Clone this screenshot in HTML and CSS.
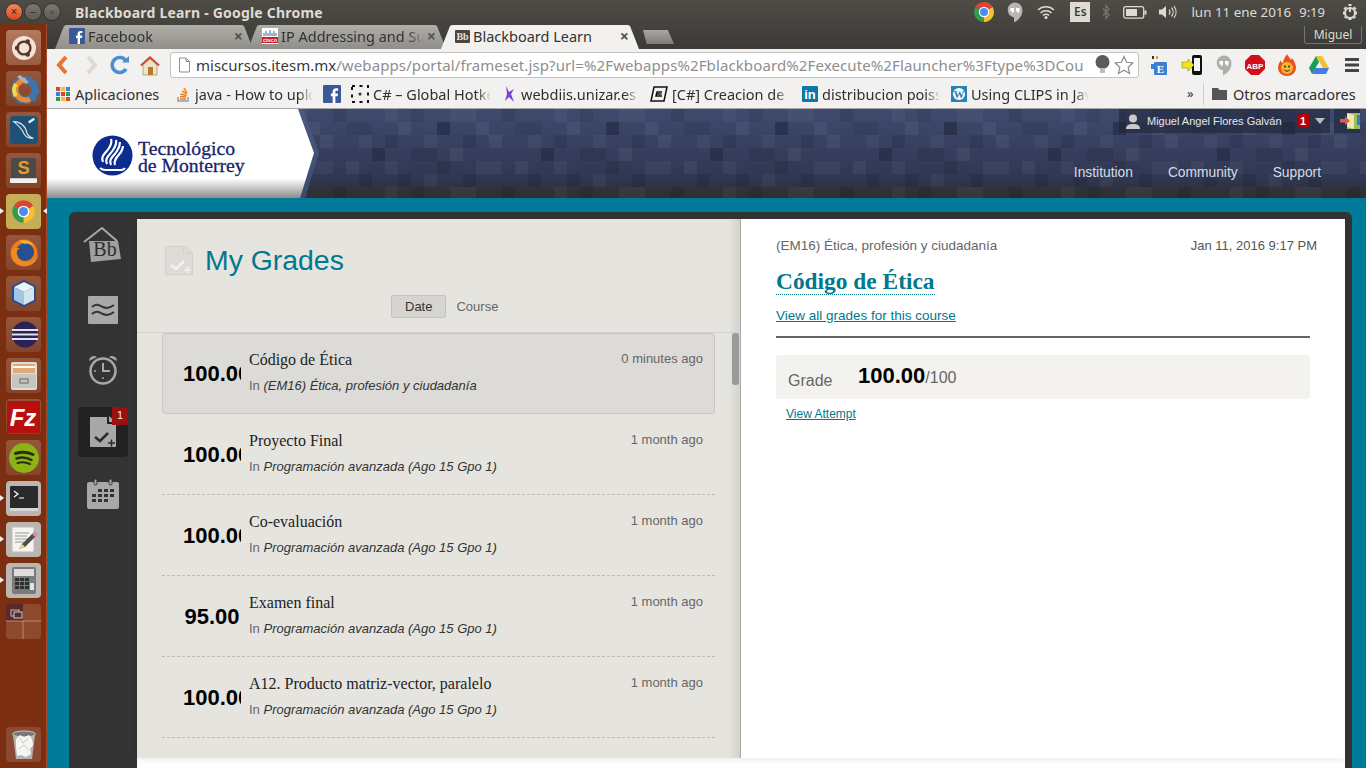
FILE: index.html
```html
<!DOCTYPE html>
<html lang="en">
<head>
    <meta charset="UTF-8">
    <title>Blackboard Learn - Google Chrome</title>
    <link rel="stylesheet" href="styles.css">
</head>
<body>

<svg class="defs" width="0" height="0">
    <symbol id="i-chrome" viewBox="0 0 24 24">
        <path fill="#dc4437" d="M12 12L3.34 7A10 10 0 0 1 20.66 7Z"/>
        <path fill="#f6c02c" d="M12 12L20.66 7A10 10 0 0 1 12 22Z"/>
        <path fill="#2f9e4c" d="M12 12L12 22A10 10 0 0 1 3.34 7Z"/>
        <circle cx="12" cy="12" r="5.2" fill="#fff"/>
        <circle cx="12" cy="12" r="4" fill="#4c8bf0"/>
    </symbol>
    <symbol id="i-fb" viewBox="0 0 16 16">
        <rect width="16" height="16" rx="1" fill="#3b5998"/>
        <path fill="#fff" d="M11 16V10h2l.3-2.4H11V6.2c0-.7.2-1.1 1.2-1.1h1.2V3c-.3 0-1-.1-1.800-.1-1.800 0-3 1.100-3 3.100v1.600H7V10h1.600v6z"/>
    </symbol>
    <symbol id="i-hangout" viewBox="0 0 16 20">
        <path d="M8 0a7.500 7.500 0 0 0-1 14.900V20c4-2 8.500-6 8.500-12.500A7.500 7.500 0 0 0 8 0z"/>
        <path fill="#fff" d="M3.500 5.500h3.500v3.500l-1.800 2.500V9H3.500zM9 5.500h3.500v3.500l-1.800 2.500V9H9z"/>
    </symbol>
</svg>

<div class="titlebar">
    <div class="win-buttons">
        <span class="win-btn win-close">×</span>
        <span class="win-btn">–</span>
        <span class="win-btn">▫</span>
    </div>
    <div class="win-title">Blackboard Learn - Google Chrome</div>
    <div class="tray">
        <svg class="tray-chrome" width="24" height="24"><use href="#i-chrome"/></svg>
        <svg class="tray-hang" width="16" height="21" fill="#b8b6b0"><use href="#i-hangout"/></svg>
        <svg class="tray-wifi" width="18" height="14" viewBox="0 0 18 14" fill="none" stroke="#dfdbd2" stroke-width="1.500">
            <path d="M1 5a11.500 11.500 0 0 1 16 0M3.500 8a8 8 0 0 1 11 0M6 10.500a4.200 4.200 0 0 1 6 0"/>
            <circle cx="9" cy="12.500" r=".8" fill="#dfdbd2"/>
        </svg>
        <span class="tray-lang">Es</span>
        <svg class="tray-bt" width="8" height="16" viewBox="0 0 8 16" fill="none" stroke="#77756f" stroke-width="1.200">
            <path d="M1 4.500l6 6.500-3 3.500V1.500l3 3.500-6 6.500"/>
        </svg>
        <svg class="tray-batt" width="24" height="13" viewBox="0 0 24 13">
            <rect x=".7" y=".7" width="20" height="11.500" rx="2" fill="none" stroke="#dfdbd2" stroke-width="1.300"/>
            <rect x="3" y="3" width="11" height="7" fill="#dfdbd2"/>
            <rect x="21.500" y="4.500" width="2" height="4" fill="#dfdbd2"/>
        </svg>
        <svg class="tray-vol" width="19" height="14" viewBox="0 0 19 14" fill="none" stroke="#dfdbd2" stroke-width="1.200">
            <path fill="#dfdbd2" stroke="none" d="M1 4.500h3L8 1v12L4 9.500H1z"/>
            <path d="M11 4.500a4 4 0 0 1 0 5M13.500 2.500a7 7 0 0 1 0 9M16 1a10 10 0 0 1 0 12" />
        </svg>
        <span class="tray-date">lun 11 ene 2016</span>
        <span class="tray-time">9:19</span>
        <svg class="tray-power" width="18" height="18" viewBox="0 0 18 18" fill="none" stroke="#dfdbd2" stroke-width="2">
            <circle cx="9" cy="10" r="5"/>
            <path stroke-width="3" stroke-dasharray="2 2.500" d="M9 1v2M2 10h2M14 10h2M3.500 4.500l1.500 1.500M14.500 4.500l-1.500 1.500M9 15v2M4 15l1-1M14 15l-1-1"/>
            <path d="M9 4v5"/>
        </svg>
    </div>
</div>

<div class="desktop">
    <div class="launcher">
        <div class="tile tile-ubuntu">
            <svg width="24" height="24" viewBox="0 0 26 26"><circle cx="13" cy="13" r="13" fill="#f1e3d8"/><circle cx="13" cy="13" r="7" fill="none" stroke="#5a3626" stroke-width="2.500"/><circle cx="5.500" cy="13" r="2.500" fill="#5a3626"/><circle cx="17" cy="6" r="2.500" fill="#5a3626"/><circle cx="17" cy="20" r="2.500" fill="#5a3626"/></svg>
        </div>
        <div class="tile">
            <svg width="30" height="30" viewBox="0 0 30 30"><circle cx="16" cy="16" r="10" fill="none" stroke="#3f74a8" stroke-width="7"/><circle cx="16" cy="16" r="13" fill="none" stroke="#3f74a8" stroke-width="3" stroke-dasharray="4 4"/><path d="M17 6a10 10 0 1 0 4 19" fill="none" stroke="#f08a2c" stroke-width="5"/><path d="M7 10a10 10 0 0 0 0 12" fill="none" stroke="#f5d94c" stroke-width="4"/><path d="M11 1l9 7-3 2-9-7z" fill="#aab2bc"/></svg>
        </div>
        <div class="tile">
            <svg width="28" height="28" viewBox="0 0 30 30"><rect width="30" height="30" rx="4" fill="#1f5176"/><path d="M4 6c7 0 13 5 14 12 1 3 4 5 7 6-4 0-8-1-10-5-2-5-6-9-11-13z" fill="none" stroke="#d5e2ec" stroke-width="1.300"/><path d="M20 7l6-4" stroke="#e6eef3" stroke-width="2.500"/></svg>
        </div>
        <div class="tile">
            <svg width="27" height="27" viewBox="0 0 28 28"><rect x="1" y="1" width="26" height="21" rx="2" fill="#4a4a48"/><rect y="22" width="28" height="5" rx="1" fill="#f0f0ee"/><text x="14" y="18" class="svg-s">S</text></svg>
        </div>
        <div class="tile tile-active">
            <svg width="27" height="27"><use href="#i-chrome"/></svg>
        </div>
        <div class="tile">
            <svg width="28" height="28" viewBox="0 0 28 28"><circle cx="14" cy="14" r="13.500" fill="#ee7a1d"/><circle cx="15" cy="13" r="9" fill="#27508f"/><path d="M1 13c1 9 8 14 14 14 8 0 13-6 13-13-1 5-5 9-11 9-6 0-9-3-10-8-1-3 1-5 3-6-4 0-8 0-9 4z" fill="#f08a1c"/><path d="M9 2c6-2 12 0 15 5-3-2-6-3-9-2z" fill="#f6b52a"/></svg>
        </div>
        <div class="tile">
            <svg width="26" height="29" viewBox="0 0 26 29"><path d="M13 1l12 6v15l-12 6-12-6V7z" fill="#2d4a86"/><path d="M13 3l10 5-10 5-10-5z" fill="#e9f2f7"/><path d="M3 8l10 5v13l-10-5z" fill="#9fc6e4"/><path d="M23 8l-10 5v13l10-5z" fill="#d3e6ee"/></svg>
        </div>
        <div class="tile">
            <svg width="31" height="31" viewBox="0 0 31 31"><path d="M15 1a14.500 14.500 0 0 0 0 29A14 14 0 0 1 15 1z" fill="#f39a1f"/><circle cx="17" cy="15.500" r="13" fill="#2c2255"/><path d="M4 11h26M4 15.500h26M4 20h26" stroke="#e3e2f0" stroke-width="2"/></svg>
        </div>
        <div class="tile">
            <svg width="26" height="28" viewBox="0 0 26 28"><rect width="26" height="28" rx="2" fill="#dedcd7"/><rect x="2" y="2" width="22" height="9" fill="#e0a97a"/><rect x="2" y="4" width="22" height="2" fill="#fdf6ec"/><rect x="1" y="12" width="24" height="14" fill="#c7c5c0"/><rect x="9" y="17" width="8" height="4" fill="none" stroke="#777" stroke-width="1.200"/></svg>
        </div>
        <div class="tile">
            <svg width="33" height="32" viewBox="0 0 33 32"><rect width="33" height="32" fill="#b80f0f"/><text x="16" y="25" class="svg-fz">Fz</text></svg>
        </div>
        <div class="tile">
            <svg width="30" height="30" viewBox="0 0 30 30" fill="none" stroke="#2a2f14" stroke-linecap="round"><circle cx="15" cy="15" r="15" fill="#8cb414" stroke="none"/><path stroke-width="3" d="M6.500 10.500c6-2 12-1.500 17.500 1"/><path stroke-width="2.500" d="M7.500 15.500c5-1.500 10.500-1 15 1.500"/><path stroke-width="2" d="M8.500 20c4-1 8.500-.8 12.500 1"/></svg>
        </div>
        <div class="tile tile-light running">
            <svg width="28" height="25" viewBox="0 0 28 25"><rect width="28" height="25" rx="1" fill="#2a2a2a"/><rect y="22" width="28" height="3" fill="#d8d8d6"/><path d="M4 5l4 3-4 3" fill="none" stroke="#fff" stroke-width="1.200"/><path d="M9 12h5" stroke="#fff"/></svg>
        </div>
        <div class="tile tile-light running">
            <svg width="28" height="28" viewBox="0 0 28 28"><rect x="2" y="1" width="22" height="25" fill="#f4f4f2" stroke="#bbb"/><path d="M5 7h14M5 10h12M5 13h13M5 16h9" stroke="#9a9a9a"/><path d="M9 23l3-5 11-11 3 3-11 11z" fill="#4f4f4c"/><path d="M22 8l3-3 3 3-3 3z" fill="#e089a8"/><path d="M9 23l3-5 3 3z" fill="#f2dc6b"/></svg>
        </div>
        <div class="tile tile-light running">
            <svg width="24" height="27" viewBox="0 0 24 27"><rect width="24" height="27" rx="2" fill="#7a7a78"/><rect x="2" y="2" width="20" height="7" fill="#dededc"/><g fill="#2e3030"><rect x="3" y="11" width="4" height="3"/><rect x="8" y="11" width="4" height="3"/><rect x="13" y="11" width="4" height="3"/><rect x="3" y="15" width="4" height="3"/><rect x="8" y="15" width="4" height="3"/><rect x="13" y="15" width="4" height="3"/><rect x="3" y="19" width="4" height="3"/><rect x="8" y="19" width="4" height="3"/><rect x="13" y="19" width="4" height="3"/></g><rect x="18" y="11" width="4" height="4" fill="#5c8aa0"/><rect x="18" y="16" width="4" height="7" fill="#dfe4e6"/></svg>
        </div>
        <div class="tile tile-workspace">
            <svg width="35" height="35" viewBox="0 0 35 35"><rect width="17" height="17" fill="#5a2a2a"/><path d="M0 17h35M17 17v18" stroke="#b78a74"/><rect x="5" y="6" width="8" height="6" fill="none" stroke="#bbb"/><rect x="8" y="8" width="8" height="6" fill="#5a2a2a" stroke="#ccc"/></svg>
        </div>
        <div class="tile tile-trash">
            <svg width="24" height="30" viewBox="0 0 24 30"><path d="M1 5l3 24h16l3-24z" fill="#b4b4b0"/><ellipse cx="12" cy="4" rx="11.500" ry="3" fill="#77777a" stroke="#c8c8c4"/><path d="M4 9l4-4 4 2 5-2 3 4 1 6-3 4 1 5-5 3-5-2-4 1-1-9z" fill="#f5f5f3"/><path d="M8 8l3 5 5-4M7 19l5-4 5 5" fill="none" stroke="#c9c9c5"/></svg>
        </div>
    </div>

    <div class="browser">
        <div class="tabstrip">
            <div class="tab">
                <svg width="16" height="16"><use href="#i-fb"/></svg>
                <span class="tab-label">Facebook</span>
                <span class="tab-x">×</span>
            </div>
            <div class="tab">
                <svg width="16" height="16" viewBox="0 0 16 16"><rect width="16" height="16" fill="#fff"/><path d="M2 8V5M4 8V3M6 8V5M8 8V2M10 8V5M12 8V3M14 8V5" stroke="#33739a"/><rect y="9" width="16" height="6" fill="#c8202c"/><text x="8" y="14" class="svg-cisco">cisco</text></svg>
                <span class="tab-label">IP Addressing and Su</span>
                <span class="tab-x">×</span>
            </div>
            <div class="tab tab-active">
                <svg width="15" height="15" viewBox="0 0 15 15"><rect width="15" height="13" y="1" rx="1" fill="#4b4640"/><text x="7.500" y="11" class="svg-bb-mini">Bb</text></svg>
                <span class="tab-label">Blackboard Learn</span>
                <span class="tab-x">×</span>
            </div>
            <div class="tab-new"></div>
            <div class="profile">Miguel</div>
        </div>

        <div class="toolbar">
            <svg class="tb-back" width="16" height="22" viewBox="0 0 16 22" fill="none" stroke="#e8752f" stroke-width="4"><path d="M12 3L5 11l7 8"/></svg>
            <svg class="tb-fwd" width="16" height="22" viewBox="0 0 16 22" fill="none" stroke="#dcdad5" stroke-width="4"><path d="M4 3l7 8-7 8"/></svg>
            <svg class="tb-reload" width="20" height="20" viewBox="0 0 20 20" fill="none"><path d="M16 14a7.500 7.500 0 1 1 0-8" stroke="#4a90d0" stroke-width="3.500"/><path d="M12 7.500h7V1z" fill="#4a90d0"/></svg>
            <svg class="tb-home" width="22" height="21" viewBox="0 0 22 21"><path d="M1 10L11 1l10 9-2 1-8-7-8 7z" fill="#d0472b"/><path d="M4 10l7-6 7 6v10H4z" fill="#eee3c8" stroke="#a18b5b" stroke-width=".7"/><rect x="9" y="12" width="5" height="8" fill="#b77a2d"/></svg>
            <div class="omnibox">
                <svg width="13" height="16" viewBox="0 0 13 16" fill="#fff" stroke="#8f8f8f"><path d="M1.500 1h6.500l3.500 3.500V15h-10z"/><path d="M8 1v3.500h3.500" fill="none"/></svg>
                <div class="url"><span class="url-host">miscursos.itesm.mx</span>/webapps/portal/frameset.jsp?url=%2Fwebapps%2Fblackboard%2Fexecute%2Flauncher%3Ftype%3DCou</div>
                <svg class="omni-bulb" width="15" height="20" viewBox="0 0 15 20"><circle cx="7.500" cy="7" r="7" fill="#5c5c5a"/><path d="M5 13h5v5H5z" fill="#bdbdb9"/></svg>
                <svg class="omni-star" width="20" height="20" viewBox="0 0 20 20" fill="#fff" stroke="#8a8a88" stroke-width="1.200"><path d="M10 1.500l2.600 5.800 6.200.7-4.600 4.200 1.300 6.200L10 15.200l-5.500 3.200 1.300-6.200L1.200 8l6.200-.7z"/></svg>
            </div>
            <div class="extensions">
                <svg width="18" height="22" viewBox="0 0 18 22"><rect x="4" y="8" width="13" height="13" rx="1" fill="#3d7fd6"/><text x="10.500" y="18.500" class="svg-ext-e">E</text><rect x="1" y="10" width="4" height="5" fill="#3d7fd6"/><rect x="2" y="2" width="2" height="3" fill="#333"/><rect x="6" y="2" width="2" height="3" fill="#e5a03a"/></svg>
                <svg width="22" height="22" viewBox="0 0 22 22"><rect x="11" y="1" width="10" height="20" rx="2" fill="#111"/><rect x="13" y="4" width="6" height="13" fill="#f4f4f4"/><path d="M1 8h6V5l6 6-6 6v-3H1z" fill="#f2e51d" stroke="#8c8412" stroke-width=".6"/></svg>
                <svg width="16" height="21" fill="#aeaeaa"><use href="#i-hangout"/></svg>
                <svg width="20" height="20" viewBox="0 0 20 20"><path d="M6 0h8l6 6v8l-6 6H6l-6-6V6z" fill="#d2101a"/><text x="10" y="13.500" class="svg-abp">ABP</text></svg>
                <svg width="18" height="22" viewBox="0 0 18 22"><path d="M9 0c1 3 3 3 4 6 1-1 1-2 1-2 3 4 4 7 4 10a9 8 0 0 1-18 0c0-4 2-6 3-8 0 2 1 3 2 3 0-3 2-6 4-9z" fill="#e8531b"/><circle cx="9" cy="14" r="6" fill="#f7b733"/><circle cx="7" cy="12.500" r="1" fill="#322"/><circle cx="11" cy="12.500" r="1" fill="#322"/><path d="M6 15.500a3.500 3.500 0 0 0 6 0" fill="none" stroke="#322"/></svg>
                <svg width="20" height="18" viewBox="0 0 20 18"><path d="M7 0h6l7 12h-6z" fill="#f6c02c"/><path d="M7 0l3 6-7 12-3-6z" fill="#1a9d58"/><path d="M6 12h14l-3 6H3z" fill="#3f7ee8"/></svg>
                <svg class="ext-menu" width="14" height="14" viewBox="0 0 14 14" fill="#444"><rect width="14" height="3"/><rect y="5.500" width="14" height="3"/><rect y="11" width="14" height="3"/></svg>
            </div>
        </div>

        <div class="bookmarks">
            <div class="bm bm-apps">
                <svg width="16" height="16" viewBox="0 0 16 16"><g fill="#d8452f"><rect x="1" y="1" width="4" height="4"/><rect x="11" y="6" width="4" height="4" fill="#2e9d4e"/></g><rect x="6" y="1" width="4" height="4" fill="#f6bf26"/><rect x="11" y="1" width="4" height="4" fill="#3f7ee8"/><rect x="1" y="6" width="4" height="4" fill="#3f7ee8"/><rect x="6" y="6" width="4" height="4" fill="#d8452f"/><rect x="1" y="11" width="4" height="4" fill="#2e9d4e"/><rect x="6" y="11" width="4" height="4" fill="#f6bf26"/><rect x="11" y="11" width="4" height="4" fill="#d8452f"/></svg>
                <span>Aplicaciones</span>
            </div>
            <div class="bm bm-java">
                <svg width="16" height="16" viewBox="0 0 16 16" fill="none" stroke-width="1.500"><path d="M3 11v4h10v-4" stroke="#999"/><path d="M5 13h6M5 10.500l6 .6M5.500 8l6 1.500" stroke="#e58026"/><path d="M7 5l5 3M9 2l3 5" stroke="#f08a2e"/></svg>
                <span class="bm-label">java - How to upload</span>
            </div>
            <div class="bm bm-icon">
                <svg width="18" height="18"><use href="#i-fb"/></svg>
            </div>
            <div class="bm bm-csharp">
                <svg width="18" height="18" viewBox="0 0 18 18" fill="none" stroke="#111" stroke-width="2" stroke-dasharray="3 4.500"><rect x="1" y="1" width="16" height="16"/><circle cx="9" cy="9" r=".5"/></svg>
                <span class="bm-label">C# – Global Hotkeys</span>
            </div>
            <div class="bm bm-webdiis">
                <svg width="14" height="18" viewBox="0 0 14 18"><path d="M3 1l3 6 5-3-3 5 3 8-5-5-4 4 2-7z" fill="#7a3fd6"/></svg>
                <span class="bm-label">webdiis.unizar.es</span>
            </div>
            <div class="bm bm-creacion">
                <svg width="18" height="16" viewBox="0 0 18 16" fill="none" stroke="#111" stroke-width="1.500"><path d="M4 1h13l-3 14H1z"/><path d="M12 6H7l-1 4h6M6.500 8h5"/></svg>
                <span class="bm-label">[C#] Creacion de un</span>
            </div>
            <div class="bm bm-linkedin">
                <svg width="16" height="16" viewBox="0 0 16 16"><rect width="16" height="16" rx="1" fill="#0e76a8"/><text x="8" y="13" class="svg-in">in</text></svg>
                <span class="bm-label">distribucion poisson</span>
            </div>
            <div class="bm bm-clips">
                <svg width="16" height="16" viewBox="0 0 16 16"><rect width="16" height="16" fill="#2684b8"/><circle cx="8" cy="8" r="6" fill="#fff"/><text x="8" y="12" class="svg-wp">W</text></svg>
                <span class="bm-label">Using CLIPS in Java</span>
            </div>
            <div class="bm-more">»</div>
            <div class="bm bm-other">
                <svg width="15" height="13" viewBox="0 0 15 13" fill="#555"><path d="M0 1h6l1.500 2H15v10H0z"/></svg>
                <span>Otros marcadores</span>
            </div>
        </div>

        <div class="site">
            <header class="site-header">
                <svg class="mosaic" width="100%" height="100%">
                    <defs>
                        <pattern id="px" width="169" height="78" patternUnits="userSpaceOnUse">
                            <rect x="0" y="0" width="13" height="13" fill="#fff" opacity=".04"/>
                            <rect x="26" y="0" width="13" height="13" fill="#000" opacity=".08"/>
                            <rect x="65" y="0" width="26" height="13" fill="#fff" opacity=".04"/>
                            <rect x="117" y="0" width="13" height="13" fill="#000" opacity=".1"/>
                            <rect x="13" y="13" width="13" height="13" fill="#fff" opacity=".05"/>
                            <rect x="52" y="13" width="13" height="13" fill="#141a2e" opacity=".4"/>
                            <rect x="91" y="13" width="13" height="13" fill="#fff" opacity=".05"/>
                            <rect x="130" y="13" width="26" height="13" fill="#000" opacity=".08"/>
                            <rect x="0" y="26" width="13" height="13" fill="#000" opacity=".1"/>
                            <rect x="39" y="26" width="13" height="13" fill="#fff" opacity=".04"/>
                            <rect x="78" y="26" width="13" height="13" fill="#000" opacity=".1"/>
                            <rect x="104" y="26" width="13" height="13" fill="#fff" opacity=".05"/>
                            <rect x="143" y="26" width="13" height="13" fill="#fff" opacity=".04"/>
                            <rect x="26" y="39" width="26" height="13" fill="#000" opacity=".1"/>
                            <rect x="65" y="39" width="13" height="13" fill="#fff" opacity=".05"/>
                            <rect x="156" y="39" width="13" height="13" fill="#141a2e" opacity=".35"/>
                            <rect x="0" y="52" width="13" height="13" fill="#fff" opacity=".04"/>
                            <rect x="52" y="52" width="13" height="13" fill="#000" opacity=".1"/>
                            <rect x="91" y="52" width="26" height="13" fill="#fff" opacity=".04"/>
                            <rect x="130" y="52" width="13" height="13" fill="#fff" opacity=".05"/>
                            <rect x="13" y="65" width="13" height="13" fill="#000" opacity=".1"/>
                            <rect x="39" y="65" width="13" height="13" fill="#fff" opacity=".04"/>
                            <rect x="78" y="65" width="13" height="13" fill="#000" opacity=".1"/>
                            <rect x="143" y="65" width="13" height="13" fill="#000" opacity=".1"/>
                        </pattern>
                        <linearGradient id="fade" x1="0" y1="0" x2="0" y2="1">
                            <stop offset="0" stop-color="#3f4a6e"/>
                            <stop offset=".45" stop-color="#363f5f"/>
                            <stop offset=".8" stop-color="#2f3650"/>
                            <stop offset=".92" stop-color="#2f3138"/>
                            <stop offset="1" stop-color="#2f2f30"/>
                        </linearGradient>
                    </defs>
                    <rect width="100%" height="100%" fill="url(#fade)"/>
                    <rect width="100%" height="100%" fill="url(#px)"/>
                </svg>
                <div class="brand">
                    <div class="brand-panel">
                        <svg width="41" height="41" viewBox="0 0 41 41">
                            <circle cx="20.500" cy="20.500" r="20" fill="#0d2c8f"/>
                            <g fill="none" stroke="#fff" stroke-width="2.200">
                                <path d="M11 27c-3-6 3-9 6-14 2-3 3-6 2-9"/>
                                <path d="M15 29c-3-6 3-9 6-14 2-3 4-6 3-10"/>
                                <path d="M19 30c-3-6 3-9 6-14 2-3 3-5 3-9"/>
                                <path d="M23 30c-2-5 3-9 6-13 1-2 2-4 2-6"/>
                            </g>
                            <path d="M8 33c3 3 6 2 8 2h9c3 0 6 1 8-2" fill="none" stroke="#fff" stroke-width="2"/>
                        </svg>
                        <div class="brand-name">Tecnológico<br>de Monterrey</div>
                    </div>
                </div>
                <div class="header-right">
                    <div class="user-bar">
                        <div class="user-box">
                            <svg width="14" height="15" viewBox="0 0 14 15" fill="#c9c9c5"><circle cx="7" cy="4.500" r="4"/><path d="M0 15c0-4 3-5 7-5s7 1 7 5z"/></svg>
                            <span class="user-name">Miguel Angel Flores Galván</span>
                            <span class="user-badge">1</span>
                            <span class="user-caret"></span>
                        </div>
                        <div class="logout-box">
                            <svg width="20" height="16" viewBox="0 0 20 16"><rect x="7" y="0" width="13" height="16" fill="#9bbd5c"/><path d="M7 0l7 2v14l-7-2z" fill="#f0e9a8"/><rect x="17" y="2" width="3" height="10" fill="#3f7eb5"/><path d="M0 6h5V3l5 5-5 4V9.500H0z" fill="#dd5a55"/></svg>
                        </div>
                    </div>
                    <nav class="site-nav">
                        <a>Institution</a>
                        <a>Community</a>
                        <a>Support</a>
                    </nav>
                </div>
            </header>

            <div class="stage">
                <div class="panel">
                    <div class="side-nav">
                        <div class="side-item side-home">
                            <svg width="40" height="36" viewBox="0 0 40 36">
                                <path d="M1 15L19 1l15 13" fill="none" stroke="#a8a8a8" stroke-width="2"/>
                                <path d="M6 14l29 0 3 18-30 3z" fill="#a0a0a0"/>
                                <text x="22" y="29" class="svg-bb">Bb</text>
                            </svg>
                        </div>
                        <div class="side-item side-stream">
                            <svg width="30" height="28" viewBox="0 0 30 28" fill="none" stroke="#333" stroke-width="2">
                                <rect width="30" height="28" rx="1" fill="#a8a8a8" stroke="none"/>
                                <path d="M4 11c4-4 7-2 11 0s7 1 11-2M4 18c4-4 7-2 11 0s7 1 11-2"/>
                            </svg>
                        </div>
                        <div class="side-item side-clock">
                            <svg width="30" height="32" viewBox="0 0 30 32" fill="none" stroke="#a8a8a8">
                                <circle cx="15" cy="18" r="12.500" stroke-width="2.500"/>
                                <path d="M1 8a5 5 0 0 1 8-4zM29 8a5 5 0 0 0-8-4z" fill="#a8a8a8" stroke="none"/>
                                <path d="M15 10v8h7" stroke-width="2"/>
                                <circle cx="15" cy="25" r=".6" fill="#a8a8a8"/><circle cx="7" cy="18" r=".6" fill="#a8a8a8"/>
                            </svg>
                        </div>
                        <div class="side-item side-active">
                            <svg width="27" height="32" viewBox="0 0 27 32">
                                <path d="M0 1h17v7h9v22a1 1 0 0 1-1 1H1a1 1 0 0 1-1-1z" fill="#a8a8a8"/>
                                <path d="M19 0l7 6h-7z" fill="#a8a8a8"/>
                                <path d="M5 21l5 4 8-8" fill="none" stroke="#2a2a2a" stroke-width="2.500"/>
                                <path d="M18 27h7M21.500 23.500v7" stroke="#2a2a2a" stroke-width="1.500"/>
                            </svg>
                            <span class="side-badge">1</span>
                        </div>
                        <div class="side-item">
                            <svg width="32" height="30" viewBox="0 0 32 30">
                                <rect y="3" width="32" height="27" rx="2" fill="#a8a8a8"/>
                                <rect x="7" y="0" width="3" height="6" rx="1.500" fill="#a8a8a8" stroke="#333"/>
                                <rect x="22" y="0" width="3" height="6" rx="1.500" fill="#a8a8a8" stroke="#333"/>
                                <g fill="#333">
                                    <rect x="11" y="10" width="4" height="3"/><rect x="17" y="10" width="4" height="3"/><rect x="23" y="10" width="4" height="3"/>
                                    <rect x="5" y="15" width="4" height="3"/><rect x="11" y="15" width="4" height="3"/><rect x="17" y="15" width="4" height="3"/><rect x="23" y="15" width="4" height="3"/>
                                    <rect x="5" y="20" width="4" height="3"/><rect x="11" y="20" width="4" height="3"/><rect x="17" y="20" width="4" height="3"/>
                                </g>
                            </svg>
                        </div>
                    </div>

                    <div class="content">
                        <div class="panes">
                            <section class="grades-pane">
                                <div class="pane-head">
                                    <div class="pane-title">
                                        <svg width="28" height="31" viewBox="0 0 28 31" fill="#dedcd6" stroke="#d2d0ca">
                                            <path d="M.5 1.500h18v7h9v21h-27z"/>
                                            <path d="M20 .5l7 6.500h-7z"/>
                                            <path d="M6 20l5 4 8-8" fill="none" stroke="#f3f2ee" stroke-width="2.500"/>
                                            <path d="M19 25h7M22.500 21.500v7" fill="none" stroke="#f3f2ee" stroke-width="1.500"/>
                                        </svg>
                                        <h1>My Grades</h1>
                                    </div>
                                    <div class="sort-tabs">
                                        <span class="sort-tab sort-active">Date</span>
                                        <span class="sort-tab">Course</span>
                                    </div>
                                </div>
                                <div class="grade-list">
                                    <div class="grade-row row-selected">
                                        <div class="grade-num">100.00</div>
                                        <div class="grade-info">
                                            <div class="grade-title">Código de Ética</div>
                                            <div class="grade-course">In <i>(EM16) Ética, profesión y ciudadanía</i></div>
                                        </div>
                                        <div class="grade-when">0 minutes ago</div>
                                    </div>
                                    <div class="grade-row">
                                        <div class="grade-num">100.00</div>
                                        <div class="grade-info">
                                            <div class="grade-title">Proyecto Final</div>
                                            <div class="grade-course">In <i>Programación avanzada (Ago 15 Gpo 1)</i></div>
                                        </div>
                                        <div class="grade-when">1 month ago</div>
                                    </div>
                                    <div class="grade-row">
                                        <div class="grade-num">100.00</div>
                                        <div class="grade-info">
                                            <div class="grade-title">Co-evaluación</div>
                                            <div class="grade-course">In <i>Programación avanzada (Ago 15 Gpo 1)</i></div>
                                        </div>
                                        <div class="grade-when">1 month ago</div>
                                    </div>
                                    <div class="grade-row">
                                        <div class="grade-num">95.00</div>
                                        <div class="grade-info">
                                            <div class="grade-title">Examen final</div>
                                            <div class="grade-course">In <i>Programación avanzada (Ago 15 Gpo 1)</i></div>
                                        </div>
                                        <div class="grade-when">1 month ago</div>
                                    </div>
                                    <div class="grade-row">
                                        <div class="grade-num">100.00</div>
                                        <div class="grade-info">
                                            <div class="grade-title">A12. Producto matriz-vector, paralelo</div>
                                            <div class="grade-course">In <i>Programación avanzada (Ago 15 Gpo 1)</i></div>
                                        </div>
                                        <div class="grade-when">1 month ago</div>
                                    </div>
                                    <div class="scroll-thumb"></div>
                                </div>
                            </section>

                            <section class="detail-pane">
                                <div class="detail-top">
                                    <span>(EM16) Ética, profesión y ciudadanía</span>
                                    <span class="detail-date">Jan 11, 2016 9:17 PM</span>
                                </div>
                                <h2><span class="detail-title">Código de Ética</span></h2>
                                <a class="detail-all">View all grades for this course</a>
                                <div class="detail-box">
                                    <span class="box-label">Grade</span>
                                    <span class="box-score">100.00</span><span class="box-max">/100</span>
                                </div>
                                <a class="detail-attempt">View Attempt</a>
                            </section>
                        </div>
                        <div class="content-foot"></div>
                    </div>
                </div>
            </div>
        </div>
    </div>
</div>

</body>
</html>
```

FILE: styles.css
```css
* {
    box-sizing: border-box;
}

html, body {
    margin: 0;
    height: 768px;
    overflow: hidden;
}

body {
    font-family: "Liberation Sans", sans-serif;
    background-color: #333;
}

.defs {
    position: absolute;
}

svg {
    display: block;
    flex-shrink: 0;
}

/* Window title bar */
.titlebar {
    height: 24px;
    display: flex;
    align-items: center;
    background: linear-gradient(#4f4c46, #45433e);
    font-family: "Noto Sans", sans-serif;
    color: #dfdbd2;
}

.win-buttons {
    display: flex;
    gap: 1px;
    width: 75px;
    padding-left: 5px;
}

.win-btn {
    width: 18px;
    height: 18px;
    border-radius: 50%;
    background: linear-gradient(#7a7872, #5c5a55);
    border: 1px solid #33322e;
    color: #33322e;
    font-size: 12px;
    line-height: 15px;
    text-align: center;
}

.win-close {
    background: linear-gradient(#f28a5f, #d9471e);
}

.win-title {
    font-size: 14px;
    font-weight: 700;
    color: #dfdbd2;
    letter-spacing: 0.2px;
}

.tray {
    margin-left: auto;
    display: flex;
    align-items: center;
}

.tray-chrome {
    margin-right: 11px;
}

.tray-hang {
    margin-right: 14px;
}

.tray-wifi {
    margin-right: 15px;
}

.tray-lang {
    width: 20px;
    height: 20px;
    margin-right: 12px;
    background-color: #dfdbd2;
    color: #3c3b37;
    font-size: 12px;
    font-weight: 600;
    line-height: 20px;
    text-align: center;
}

.tray-bt {
    margin-right: 13px;
}

.tray-batt {
    margin-right: 11px;
}

.tray-vol {
    margin-right: 14px;
}

.tray-date {
    font-size: 13.400px;
    margin-right: 8px;
}

.tray-time {
    font-size: 13px;
    margin-right: 16px;
}

.tray-power {
    margin-right: 7px;
}

/* Launcher and browser side by side */
.desktop {
    display: flex;
    height: 744px;
}

.launcher {
    width: 47px;
    display: flex;
    flex-direction: column;
    gap: 6px;
    padding: 6px 0 6px 6px;
    background-color: #7c2e10;
    border-right: 1px solid #a84a28;
}

.tile {
    position: relative;
    width: 35px;
    height: 35px;
    display: flex;
    align-items: center;
    justify-content: center;
    border-radius: 4px;
    background: linear-gradient(#95563c, #85452b);
}

.tile-ubuntu {
    background: linear-gradient(#b37a60, #9a5c41);
}

.tile-active {
    background: #c7ad58;
}

.tile-active::before,
.tile-active::after,
.running::before {
    content: "";
    position: absolute;
    top: 14px;
    border: 3px solid transparent;
}

.tile-active::before,
.running::before {
    left: -6px;
    border-left: 4px solid #eee;
}

.tile-active::after {
    right: -6px;
    border-right: 4px solid #eee;
}

.tile-light {
    background: #bdb6b0;
}

.tile-workspace {
    background: #8f4a2e;
    overflow: hidden;
}

.tile-trash {
    margin-top: auto;
    background: #8c4a33;
}

.svg-s {
    font: 700 19px "Liberation Sans", sans-serif;
    fill: #e89b2c;
    text-anchor: middle;
}

.svg-fz {
    font: italic 700 24px "Liberation Sans", sans-serif;
    fill: #fff;
    text-anchor: middle;
}

.svg-cisco {
    font: 700 5.500px "Liberation Sans", sans-serif;
    fill: #fff;
    text-anchor: middle;
}

.svg-bb-mini {
    font: 700 10px "Liberation Serif", serif;
    fill: #e8e2d6;
    text-anchor: middle;
}

.svg-ext-e {
    font: 700 11px "Liberation Serif", serif;
    fill: #fff;
    text-anchor: middle;
}

.svg-abp {
    font: 700 8px "Liberation Sans", sans-serif;
    fill: #fff;
    text-anchor: middle;
}

.svg-in {
    font: 700 13px "Liberation Sans", sans-serif;
    fill: #fff;
    text-anchor: middle;
}

.svg-wp {
    font: 700 11px "Liberation Serif", serif;
    fill: #2684b8;
    text-anchor: middle;
}

.svg-bb {
    font: 20px "Liberation Serif", serif;
    fill: #2e2e2e;
    text-anchor: middle;
}

/* Browser chrome */
.browser {
    width: 1319px;
    display: flex;
    flex-direction: column;
}

.tabstrip {
    position: relative;
    height: 25px;
    display: flex;
    align-items: flex-end;
    padding-left: 8px;
    background: linear-gradient(#45433e, #3b3a36);
    font-family: "Noto Sans", sans-serif;
}

.tab {
    width: 198px;
    height: 24px;
    margin-right: -5px;
    display: flex;
    align-items: center;
    gap: 3px;
    padding: 0 10px 2px 14px;
    background: linear-gradient(#b0aea8, #908e89);
    clip-path: polygon(0 100%, 9px 1px, 11px 0, calc(100% - 11px) 0, calc(100% - 9px) 1px, 100% 100%);
    font-size: 14.500px;
    color: #33322e;
}

.tab-active {
    position: relative;
    background: #f2f1f0;
}

.tab-label {
    flex: 1;
    overflow: hidden;
    white-space: nowrap;
    -webkit-mask-image: linear-gradient(to right, #000 88%, transparent);
    mask-image: linear-gradient(to right, #000 88%, transparent);
}

.tab-active .tab-label {
    -webkit-mask-image: none;
    mask-image: none;
}

.tab-x {
    color: #55534f;
    font-size: 16px;
    font-weight: 700;
}

.tab-new {
    width: 31px;
    height: 14px;
    margin: 0 0 5px 9px;
    background: linear-gradient(#a8a6a0, #7f7d78);
    clip-path: polygon(0 0, 80% 0, 100% 100%, 12% 100%);
}

.profile {
    position: absolute;
    right: 4px;
    top: 2px;
    width: 58px;
    height: 18px;
    border: 1px solid #77756f;
    border-top: 0;
    border-radius: 0 0 3px 3px;
    color: #dfdbd2;
    font-size: 12px;
    line-height: 18px;
    text-align: center;
}

.toolbar {
    height: 32px;
    display: flex;
    align-items: center;
    padding-left: 7px;
    background-color: #f2f1f0;
}

.tb-fwd {
    margin-left: 14px;
}

.tb-reload {
    margin-left: 10px;
}

.tb-home {
    margin-left: 9px;
}

.omnibox {
    width: 969px;
    height: 26px;
    margin-left: 9px;
    display: flex;
    align-items: center;
    padding: 0 3px 0 7px;
    background-color: #fff;
    border: 1px solid #c4c3c0;
    border-radius: 3px;
}

.url {
    width: 895px;
    margin-left: 5px;
    overflow: hidden;
    white-space: nowrap;
    font-family: "Noto Sans", sans-serif;
    font-size: 15px;
    letter-spacing: 0.11px;
    color: #8e8e8e;
}

.url-host {
    color: #3a3a3a;
    letter-spacing: 0;
}

.omni-bulb {
    margin-left: 4px;
}

.omni-star {
    margin-left: 4px;
}

.extensions {
    display: flex;
    align-items: center;
    gap: 13px;
    margin-left: 11px;
}

.ext-menu {
    margin-left: 3px;
}

.bookmarks {
    height: 28px;
    display: flex;
    align-items: center;
    padding: 0 0 2px 8px;
    background-color: #f2f1f0;
    border-bottom: 1px solid #a8a7a4;
    font-family: "Noto Sans", sans-serif;
    font-size: 14.500px;
    color: #2f2f2f;
    white-space: nowrap;
}

.bm {
    display: flex;
    align-items: center;
    gap: 4px;
    flex-shrink: 0;
}

.bm-label {
    width: 118px;
    overflow: hidden;
    -webkit-mask-image: linear-gradient(to right, #000 88%, transparent);
    mask-image: linear-gradient(to right, #000 88%, transparent);
}

.bm-apps {
    width: 120px;
}

.bm-java {
    width: 148px;
}

.bm-icon {
    width: 28px;
}

.bm-csharp {
    width: 152px;
}

.bm-webdiis {
    width: 147px;
}

.bm-creacion {
    width: 152px;
}

.bm-linkedin {
    width: 149px;
}

.bm-clips {
    width: 236px;
}

.bm-more {
    width: 17px;
    font-size: 13px;
    border-right: 1px solid #d0cfcc;
    height: 22px;
    line-height: 20px;
}

.bm-other {
    margin-left: 8px;
    gap: 6px;
}

/* Page */
.site {
    flex: 1;
    display: flex;
    flex-direction: column;
    min-height: 0;
}

.site-header {
    position: relative;
    height: 89px;
    display: flex;
    justify-content: space-between;
    background-color: #2f3a58;
}

.mosaic {
    position: absolute;
    inset: 0;
}

.brand {
    position: relative;
    width: 276px;
}

.brand::before {
    content: "";
    position: absolute;
    inset: 0;
    background: linear-gradient(#4a5a84, #3c4a6c);
    clip-path: polygon(0 0, 256px 0, 272px 44px, 258px 89px, 0 89px);
}

.brand-panel {
    position: relative;
    height: 100%;
    display: flex;
    align-items: flex-start;
    gap: 5px;
    padding: 26px 0 0 45px;
    background: linear-gradient(#fff 78%, #8c8c8c 100%);
    clip-path: polygon(0 0, 251px 0, 267px 44px, 253px 89px, 0 89px);
}

.brand-name {
    font-family: "Liberation Serif", serif;
    font-size: 19.700px;
    line-height: 17px;
    color: #16246b;
    -webkit-text-stroke: 0.3px #16246b;
    padding-top: 5px;
}

.header-right {
    position: relative;
    display: flex;
    flex-direction: column;
    align-items: flex-end;
    padding-right: 6px;
}

.user-bar {
    display: flex;
    gap: 4px;
    height: 24px;
}

.user-box {
    width: 211px;
    display: flex;
    align-items: center;
    padding-left: 7px;
    background-color: rgba(30, 36, 56, 0.6);
    font-size: 11px;
    color: #e6e8ee;
}

.user-name {
    margin-left: 7px;
}

.user-badge {
    width: 11px;
    height: 14px;
    margin-left: 16px;
    background-color: #b80000;
    border-radius: 2px;
    color: #fff;
    font-weight: 700;
    font-size: 11px;
    line-height: 14px;
    text-align: center;
}

.user-caret {
    margin-left: 6px;
    border: 5px solid transparent;
    border-top: 6px solid #b9bcc4;
    border-bottom: 0;
}

.logout-box {
    width: 26px;
    display: flex;
    align-items: center;
    justify-content: flex-end;
    background-color: rgba(30, 36, 56, 0.6);
}

.site-nav {
    display: flex;
    gap: 35px;
    margin-top: 32px;
    padding-right: 39px;
    font-size: 13.800px;
    color: #d6dce6;
}

/* Teal stage and dark panel */
.stage {
    flex: 1;
    min-height: 0;
    padding: 14px 14px 0 22px;
    background-color: #007a99;
}

.panel {
    height: 100%;
    display: flex;
    padding: 7px 7px 0 0;
    background-color: #333;
    border-radius: 6px 6px 0 0;
}

.side-nav {
    width: 68px;
    display: flex;
    flex-direction: column;
    align-items: center;
    gap: 12px;
    padding-top: 2px;
}

.side-item {
    position: relative;
    width: 50px;
    height: 50px;
    display: flex;
    align-items: center;
    justify-content: center;
}

.side-home {
    padding-bottom: 2px;
}

.side-stream {
    padding-top: 4px;
}

.side-clock {
    padding-bottom: 2px;
}

.side-active {
    background-color: #222;
    border-radius: 4px;
}

.side-badge {
    position: absolute;
    top: 0;
    right: 0;
    width: 16px;
    height: 18px;
    background-color: #9c1010;
    border-radius: 0 4px 0 0;
    color: #eee;
    font-size: 11px;
    line-height: 17px;
    text-align: center;
}

.content {
    flex: 1;
    display: flex;
    flex-direction: column;
    background-color: #fff;
}

.panes {
    height: 539px;
    display: flex;
    box-shadow: 0 2px 6px rgba(0, 0, 0, 0.08);
}

.grades-pane {
    width: 603px;
    background: linear-gradient(to right, #e5e4df calc(100% - 12px), #d3d2cd);
    overflow: hidden;
}

.pane-head {
    height: 114px;
    border-bottom: 1px solid #d2d1cc;
}

.pane-title {
    display: flex;
    align-items: center;
    gap: 12px;
    padding: 25px 0 0 28px;
}

.pane-title h1 {
    margin: 0;
    font-size: 28.400px;
    font-weight: 400;
    color: #00788f;
}

.sort-tabs {
    display: flex;
    align-items: center;
    gap: 10px;
    margin: 18px 0 0 254px;
    font-size: 13px;
    color: #666;
}

.sort-tab {
    height: 23px;
    line-height: 23px;
}

.sort-active {
    padding: 0 13px;
    background-color: #d6d5d1;
    border: 1px solid #c4c3be;
    border-radius: 2px;
    line-height: 22px;
    color: #333;
}

.grade-list {
    position: relative;
    padding: 0 25px 0 25px;
}

.grade-row {
    height: 81px;
    display: flex;
    align-items: flex-start;
    padding: 18px 12px 0 21px;
    border-bottom: 1px dashed #bcbbb6;
}

.row-selected {
    background-color: #dcdbd7;
    border: 1px solid #c9c8c3;
    border-radius: 3px;
    padding: 17px 11px 0 20px;
}

.grade-num {
    width: 58px;
    margin-top: 10px;
    overflow: hidden;
    white-space: nowrap;
    text-align: center;
    font-size: 22px;
    font-weight: 700;
    color: #000;
}

.grade-info {
    flex: 1;
    margin-left: 8px;
}

.grade-title {
    font-family: "Liberation Serif", serif;
    font-size: 16px;
    color: #222;
}

.grade-course {
    margin-top: 9px;
    font-size: 13px;
    color: #666;
}

.grade-course i {
    color: #333;
}

.grade-when {
    font-size: 13px;
    color: #666;
}

.scroll-thumb {
    position: absolute;
    top: 0;
    right: 1px;
    width: 7px;
    height: 52px;
    background-color: #999;
    border-radius: 3px;
}

.detail-pane {
    width: 605px;
    padding: 19px 28px 0 35px;
    background-color: #fff;
    border-left: 1px solid #aaa9a5;
}

.detail-top {
    display: flex;
    justify-content: space-between;
    font-size: 13.500px;
    color: #666;
}

.detail-date {
    font-size: 13px;
    color: #555;
}

.detail-pane h2 {
    margin: 14px 0 0;
    font-family: "Liberation Serif", serif;
    font-size: 23.400px;
    font-weight: 700;
    line-height: 28px;
    color: #00788f;
}

.detail-title {
    border-bottom: 1px dotted #00788f;
}

.detail-all {
    display: block;
    margin-top: 13px;
    padding-bottom: 13px;
    margin-right: 7px;
    font-size: 13.500px;
    color: #00788f;
    text-decoration: underline;
    border-bottom: 2px solid #666;
}

.detail-box {
    height: 44px;
    margin: 17px 7px 0 0;
    display: flex;
    align-items: flex-start;
    padding: 8px 0 0 12px;
    background-color: #f3f2ef;
    border-radius: 3px;
    color: #666;
    font-size: 16px;
}

.box-label {
    width: 70px;
    margin-top: 9px;
}

.box-score {
    font-size: 22px;
    font-weight: 700;
    color: #000;
}

.box-max {
    margin-top: 6px;
}

.detail-attempt {
    display: inline-block;
    margin: 8px 0 0 10px;
    font-size: 12px;
    color: #00788f;
    text-decoration: underline;
}

.content-foot {
    flex: 1;
}
```
